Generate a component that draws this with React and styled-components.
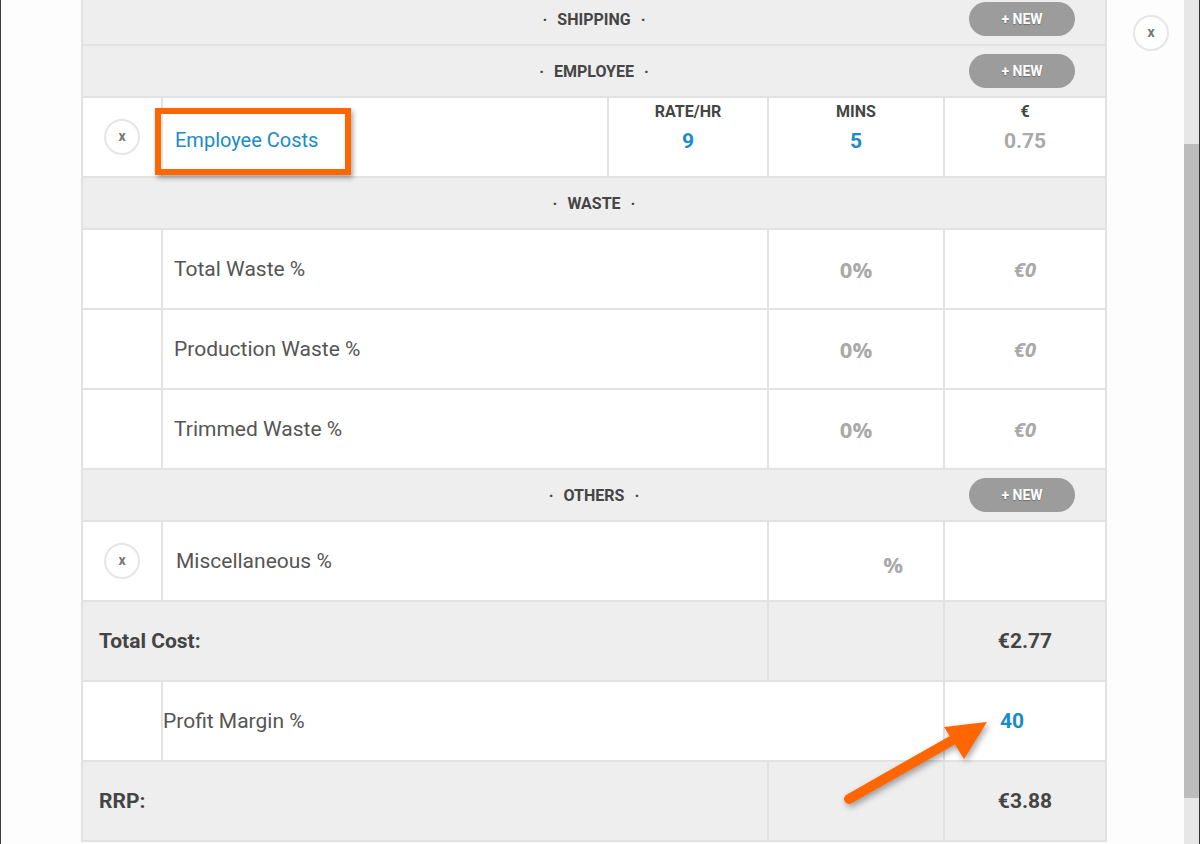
import styled, { createGlobalStyle, css } from "styled-components";

const GlobalStyle = createGlobalStyle`
  html, body {
    margin: 0;
    padding: 0;
    background: #fdfdfd;
    overflow: hidden;
  }
  body {
    font-family: Roboto, "Noto Sans", Arial, sans-serif;
  }
`;

const COLS = "80px 446px 160px 176px 160px";
const BORDER = "#e2e2e2";
const BLUE = "#1a8cc9";

const Page = styled.div`
  position: relative;
  display: flex;
  width: 1200px;
  height: 844px;
  overflow: hidden;
  border-left: 1px solid #3d3d3d;
  box-sizing: border-box;
`;

const Main = styled.div`
  padding-left: 80px;
`;

const Table = styled.div`
  width: 1026px;
  margin-top: -6px;
  border-left: 2px solid ${BORDER};
  border-right: 2px solid ${BORDER};
  box-sizing: border-box;
`;

const SectionHeader = styled.div`
  display: grid;
  grid-template-columns: 160px 1fr 160px;
  align-items: center;
  height: 50px;
  background: #eeeeee;
  border-bottom: 2px solid ${BORDER};
`;

const SectionTitle = styled.div`
  grid-column: 2;
  text-align: center;
  font-size: 16px;
  font-weight: 700;
  color: #454545;
  text-transform: uppercase;
`;

const Dot = styled.span`
  margin: 0 10px;
`;

const NewButton = styled.button`
  grid-column: 3;
  justify-self: end;
  margin-right: 30px;
  width: 106px;
  height: 34px;
  border: none;
  border-radius: 17px;
  background: #9c9c9c;
  color: #fff;
  font-family: inherit;
  font-size: 14px;
  font-weight: 700;
  text-shadow: 0 1px 1px rgba(0, 0, 0, 0.3);
  cursor: pointer;
`;

const Row = styled.div`
  display: grid;
  grid-template-columns: ${COLS};
  height: 78px;
  background: ${(p) => (p.$shaded ? "#eeeeee" : "#fff")};
  border-bottom: 2px solid ${BORDER};
`;

const Cell = styled.div`
  grid-column: ${(p) => p.$span || "auto"};
  display: flex;
  align-items: center;
  justify-content: ${(p) => p.$justify || "flex-start"};
  padding: ${(p) => p.$pad || "0"};
  border-right: 2px solid ${BORDER};
  box-sizing: border-box;
  min-width: 0;
  &:last-child {
    border-right: none;
  }
`;

const StackCell = styled(Cell)`
  flex-direction: column;
  align-items: center;
  justify-content: flex-start;
  padding-top: 5px;
`;

const ColHead = styled.div`
  font-size: 16px;
  line-height: 18px;
  font-weight: 700;
  color: #454545;
`;

const Value = styled.span`
  font-size: 21px;
  line-height: 24px;
  font-weight: 700;
  color: ${(p) => (p.$tone === "blue" ? BLUE : p.$tone === "dark" ? "#444" : "#a9a9a9")};
  margin-top: ${(p) => p.$mt || "0"};
`;

const Muted = styled.span`
  font-family: "Open Sans", Roboto, sans-serif;
  font-size: ${(p) => (p.$italic ? "20px" : "22px")};
  font-weight: 700;
  font-style: ${(p) => (p.$italic ? "italic" : "normal")};
  color: #a9a9a9;
`;

const Label = styled.span`
  position: relative;
  display: inline-block;
  font-size: ${(p) => p.$size || "21px"};
  line-height: 24px;
  color: ${(p) => (p.$link ? BLUE : "#555")};
  ${(p) =>
    p.$highlight &&
    css`
      &::after {
        content: "";
        position: absolute;
        left: -20px;
        right: -33px;
        top: -20px;
        bottom: -23px;
        border: 6px solid #ff6600;
        box-shadow: 2px 3px 5px rgba(0, 0, 0, 0.35);
      }
    `}
`;

const TotalLabel = styled.span`
  font-size: 21px;
  font-weight: 700;
  color: #444;
`;

const RemoveButton = styled.button`
  width: 36px;
  height: 36px;
  border-radius: 50%;
  border: 2px solid #e6e6e6;
  background: #fff;
  color: #777;
  font-family: inherit;
  font-size: 14px;
  font-weight: 700;
  line-height: 1;
  padding: 0 0 2px;
  cursor: pointer;
`;

const Aside = styled.div`
  width: 36px;
  margin-left: 26px;
  padding-top: 15px;
`;

const Scrollbar = styled.div`
  margin-left: auto;
  width: 16px;
  height: 844px;
  background: #e7e7e7;
  border-right: 1px solid #333;
  box-sizing: border-box;
  padding-top: 144px;
`;

const Thumb = styled.div`
  height: 654px;
  background: #bcbcbc;
`;

const Overlay = styled.svg`
  position: absolute;
  left: 0;
  top: 0;
  pointer-events: none;
  filter: drop-shadow(2px 3px 3px rgba(0, 0, 0, 0.35));
`;

const Section = ({ title, button }) => (
  <SectionHeader>
    <SectionTitle>
      <Dot>·</Dot>
      {title}
      <Dot>·</Dot>
    </SectionTitle>
    {button && <NewButton>+ NEW</NewButton>}
  </SectionHeader>
);

const WasteRow = ({ label }) => (
  <Row>
    <Cell />
    <Cell $span="span 2" $pad="0 0 0 11px">
      <Label>{label}</Label>
    </Cell>
    <Cell $justify="center">
      <Muted>0%</Muted>
    </Cell>
    <Cell $justify="center">
      <Muted $italic>€0</Muted>
    </Cell>
  </Row>
);

const TotalRow = ({ label, value }) => (
  <Row $shaded>
    <Cell $span="span 3" $pad="0 0 0 16px">
      <TotalLabel>{label}</TotalLabel>
    </Cell>
    <Cell />
    <Cell $justify="center">
      <Value $tone="dark">{value}</Value>
    </Cell>
  </Row>
);

export default function App() {
  return (
    <>
      <GlobalStyle />
      <Page>
        <Main>
          <Table>
            <Section title="Shipping" button />
            <Section title="Employee" button />
            <Row>
              <Cell $justify="center">
                <RemoveButton>x</RemoveButton>
              </Cell>
              <Cell $pad="5px 0 0 12px">
                <Label $link $highlight $size="20px">Employee Costs</Label>
              </Cell>
              <StackCell>
                <ColHead>RATE/HR</ColHead>
                <Value $tone="blue" $mt="8px">9</Value>
              </StackCell>
              <StackCell>
                <ColHead>MINS</ColHead>
                <Value $tone="blue" $mt="8px">5</Value>
              </StackCell>
              <StackCell>
                <ColHead>€</ColHead>
                <Value $mt="8px">0.75</Value>
              </StackCell>
            </Row>
            <Section title="Waste" />
            <WasteRow label="Total Waste %" />
            <WasteRow label="Production Waste %" />
            <WasteRow label="Trimmed Waste %" />
            <Section title="Others" button />
            <Row>
              <Cell $justify="center">
                <RemoveButton>x</RemoveButton>
              </Cell>
              <Cell $span="span 2" $pad="0 0 0 13px">
                <Label>Miscellaneous %</Label>
              </Cell>
              <Cell $justify="flex-end" $pad="6px 40px 0 0">
                <Muted>%</Muted>
              </Cell>
              <Cell />
            </Row>
            <TotalRow label="Total Cost:" value="€2.77" />
            <Row>
              <Cell />
              <Cell $span="span 3">
                <Label $size="21px">Profit Margin %</Label>
              </Cell>
              <Cell $justify="center" $pad="0 26px 0 0">
                <Value $tone="blue">40</Value>
              </Cell>
            </Row>
            <TotalRow label="RRP:" value="€3.88" />
          </Table>
        </Main>
        <Aside>
          <RemoveButton>x</RemoveButton>
        </Aside>
        <Scrollbar>
          <Thumb />
        </Scrollbar>
        <Overlay width="1200" height="844" viewBox="0 0 1200 844">
          <line x1="848" y1="799" x2="950" y2="741" stroke="#ff6600" strokeWidth="10" strokeLinecap="round" />
          <polygon points="986,722 943,727 963,759" fill="#ff6600" />
        </Overlay>
      </Page>
    </>
  );
}
